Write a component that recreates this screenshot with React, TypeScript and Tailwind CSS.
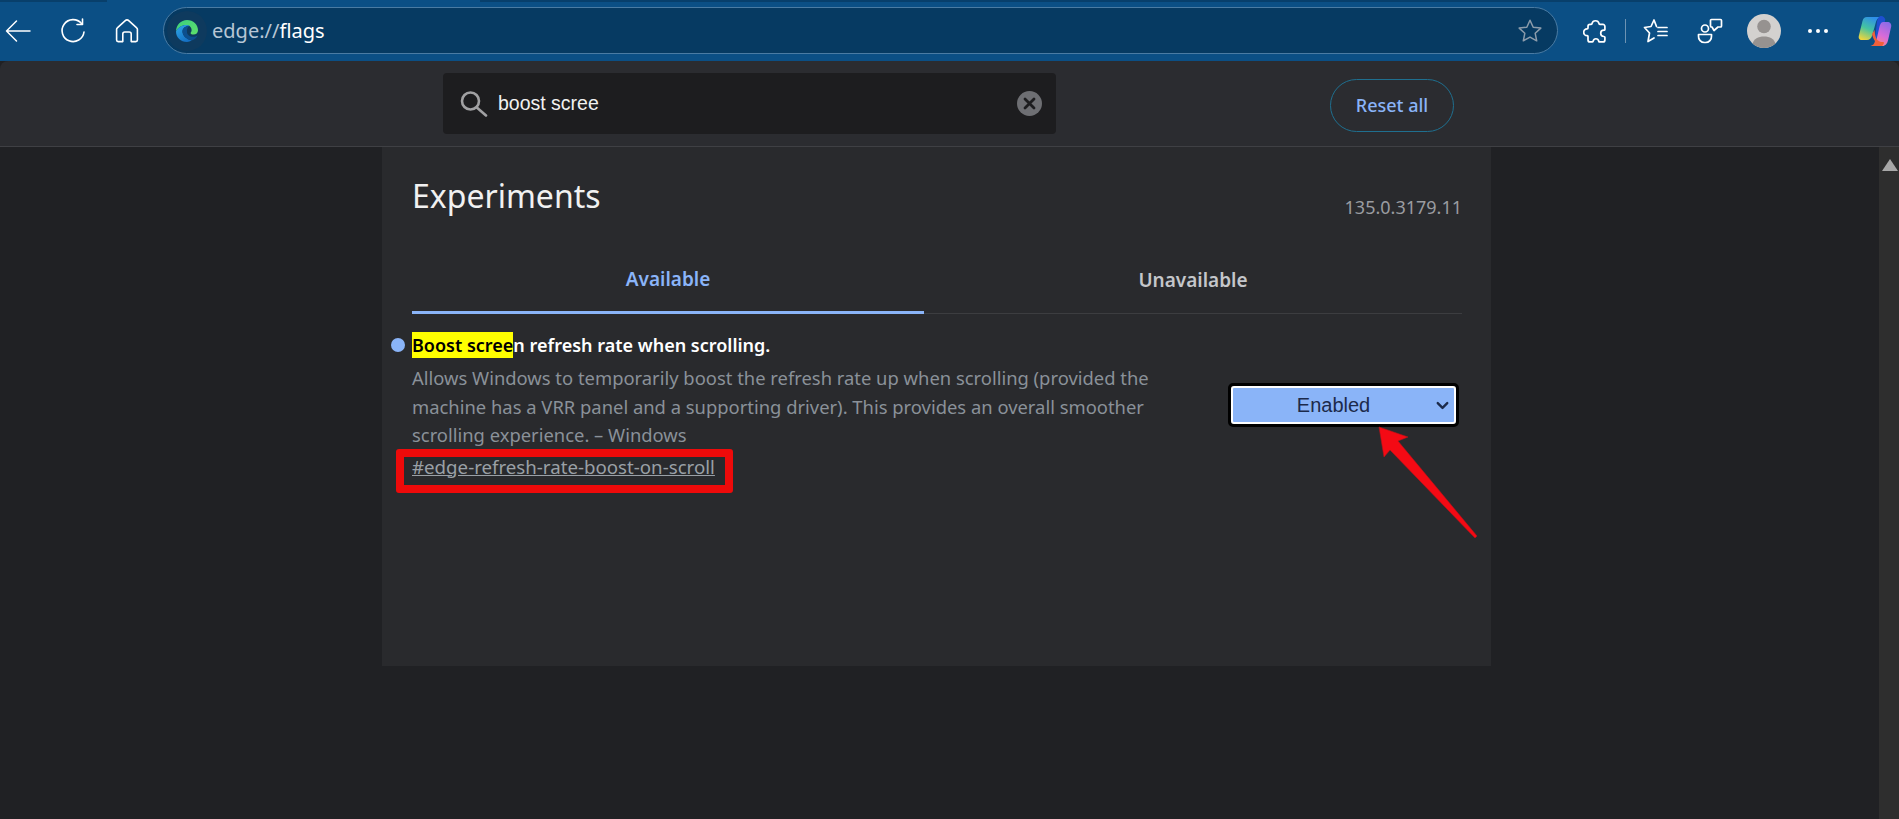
import { ChevronDown } from 'lucide-react'

const uiFont = "font-['Noto_Sans',sans-serif]"
const arialFont = "font-['Liberation_Sans',Arial,sans-serif]"

function BackIcon() {
  return (
    <svg width="26" height="24" viewBox="0 0 26 24" fill="none" stroke="#fff" strokeWidth="1.5" strokeLinecap="round" strokeLinejoin="round">
      <path d="M1.5 12H25M11.5 2 1.5 12l10 10" />
    </svg>
  )
}

function RefreshIcon() {
  return (
    <svg width="26" height="26" viewBox="0 0 26 26" fill="none" stroke="#fff" strokeWidth="1.6" strokeLinecap="round" strokeLinejoin="round">
      <path d="M21.5 5.5A11 11 0 1 0 24 14" />
      <path d="M22.5 1v5.5H17" />
    </svg>
  )
}

function HomeIcon() {
  return (
    <svg width="24" height="24" viewBox="0 0 24 24" fill="none" stroke="#fff" strokeWidth="1.6" strokeLinejoin="round">
      <path d="M10 1.8a3 3 0 0 1 4 0l7.7 7a2 2 0 0 1 .7 1.5V21a1.6 1.6 0 0 1-1.6 1.6h-4.6V15a2 2 0 0 0-2-2h-4.4a2 2 0 0 0-2 2v7.6H3.2A1.6 1.6 0 0 1 1.6 21V10.3a2 2 0 0 1 .7-1.5z" />
    </svg>
  )
}

function EdgeLogo() {
  return (
    <svg width="24" height="24" viewBox="0 0 24 24">
      <defs>
        <linearGradient id="edgeBlue" x1="0" y1="0" x2="0.6" y2="1">
          <stop offset="0" stopColor="#2fa8e8" />
          <stop offset="1" stopColor="#1570c4" />
        </linearGradient>
        <linearGradient id="edgeGreen" x1="0" y1="0" x2="1" y2="1">
          <stop offset="0" stopColor="#3bcf7f" />
          <stop offset="1" stopColor="#5fe06a" />
        </linearGradient>
      </defs>
      <path d="M1 12.5C1 6 6 1 12 1c6.3 0 11 4.6 11 10.2 0 2.8-2 4.4-4.4 4.4-1.7 0-3-.7-3-1.7 0-.6 1-1 1-3 0-2.7-2.4-5-5.3-5C7 5.9 3 8.3 1 12.5z" fill="url(#edgeGreen)" />
      <path d="M1 12.5c2-4.2 6-6.6 10.3-6.6 1.3 0 2.4.4 3.3 1.100-3.800-.5-7.100 2-7.100 5.500 0 3.600 3 6.800 7 8.300 1 .4 2 .5 2.500.5C15 22.400 13.500 23 12 23 5.900 23 1 18.400 1 12.500z" fill="url(#edgeBlue)" />
      <path d="M7.500 12.500c0 3.600 3 6.800 7 8.300 1.600.6 2.900.4 3.500.1 2-1 3.500-2.500 4.500-4.500-1.600 1.500-5 2-7.500.8-3.400-1.700-3-4.500-3-4.500-.3-1.700.3-4.600 2.600-5.700-3.800-.5-7.100 2-7.100 5.500z" fill="#0c4f8e" />
    </svg>
  )
}

function StarIcon() {
  return (
    <svg width="26" height="26" viewBox="0 0 26 26" fill="none" stroke="#8c9cab" strokeWidth="1.5" strokeLinejoin="round">
      <path d="M13 2.200l3.200 7 7.600.9-5.600 5.200 1.500 7.500L13 19.100l-6.700 3.700 1.500-7.500-5.600-5.200 7.600-.9z" />
    </svg>
  )
}

function PuzzleIcon() {
  return (
    <svg width="24" height="26" viewBox="0 0 24 26" fill="none" stroke="#fff" strokeWidth="1.7" strokeLinejoin="round">
      <path d="M9 5.500a3.600 3.600 0 0 1 7 0c0 .5.400.9.900.9h3a2 2 0 0 1 2 2v3c0 .5-.5.800-1 .7a3.200 3.200 0 1 0 0 6.400c.5 0 1 .3 1 .8v2.600a2 2 0 0 1-2 2h-3.400c-.5 0-.8-.4-.8-.9a2.800 2.800 0 0 0-5.500 0c0 .5-.3.900-.8.900H7a2 2 0 0 1-2-2v-3.300c0-.5-.4-.8-.9-.9a3.400 3.400 0 0 1 0-6.800c.5 0 .9-.4.900-.9V8.400a2 2 0 0 1 2-2h1.100c.5 0 .9-.4.900-.9z" />
    </svg>
  )
}

function FavoritesIcon() {
  return (
    <svg width="26" height="26" viewBox="0 0 26 26" fill="none" stroke="#fff" strokeWidth="1.7" strokeLinecap="round" strokeLinejoin="round">
      <path d="M11 20 5 23.500 6.500 15 1.500 9.500 8 8.500 11 2l2.500 6.500" />
      <path d="M15 9.500h9M15 13.500h9M15 17.500h9" />
    </svg>
  )
}

function CollectionsIcon() {
  return (
    <svg width="26" height="26" viewBox="0 0 26 26" fill="none" stroke="#fff" strokeWidth="1.7" strokeLinejoin="round">
      <circle cx="8" cy="10.5" r="3.5" />
      <path d="M1.500 16.500h13V18a6 6 0 0 1-6 6.500h-1a6 6 0 0 1-6-6.500z" />
      <path d="M14.500 1.500h9a1 1 0 0 1 1 1V8a1 1 0 0 1-1 1H21l-4 3.500L15 9h-.5a1 1 0 0 1-1-1V2.500a1 1 0 0 1 1-1z" />
    </svg>
  )
}

function Avatar() {
  return (
    <svg width="34" height="34" viewBox="0 0 34 34">
      <circle cx="17" cy="17" r="17" fill="#d3d1cf" />
      <circle cx="17" cy="12.5" r="6.8" fill="#969290" />
      <path d="M5.500 29.500C7 25 11 22.500 17 22.500s10 2.500 11.500 7A17 17 0 0 1 17 34a17 17 0 0 1-11.500-4.500z" fill="#969290" />
    </svg>
  )
}

function CopilotLogo() {
  return (
    <svg width="34" height="32" viewBox="0 0 34 32">
      <defs>
        <linearGradient id="copLeft" x1="0.6" y1="0" x2="0.2" y2="1">
          <stop offset="0" stopColor="#2f8fe8" />
          <stop offset="0.5" stopColor="#45c4a0" />
          <stop offset="1" stopColor="#f2d53c" />
        </linearGradient>
        <linearGradient id="copRight" x1="0.8" y1="0" x2="0.3" y2="1">
          <stop offset="0" stopColor="#8b6be8" />
          <stop offset="0.55" stopColor="#d86bd8" />
          <stop offset="1" stopColor="#ff8a7a" />
        </linearGradient>
      </defs>
      <path d="M9 2h13c-2.500 1-3.500 3-4.200 5.500l-3.600 13c-.7 2.500-2.700 4.500-5.200 4.500H3.500C1 25 .3 22.800.9 20.500L4.500 6C5.200 3.500 6.500 2 9 2z" fill="url(#copLeft)" />
      <path d="M19 6.500c.7-2.500 1.500-5 3.500-5.500 2-.5 4 1 4.800 3.500l-3.500 17c-.6 3-2 5-4.800 6-1 .3-2 .2-2.300-1.500z" fill="#1e4fd0" />
      <path d="M25 7h4.500C32 7 33.700 9 33.200 11.500l-3.200 14c-.7 3-2.700 5.500-5.500 5.500H12c3 0 5.500-2 6.200-5l3-13C21.800 10 23 7 25 7z" fill="url(#copRight)" />
      <path d="M14 19l2.500-4c.5 3 .5 8 3.500 10.500 1.500 1.200 3 1.500 4.500 1.500 1.500 0 2.500.5 0 3.700-.5.300-1.500.3-2.500.3H12c3 0 4.500-2.500 5-5-1.500-2-2.500-4.500-3-7z" fill="#f0603a" />
    </svg>
  )
}

function SearchIcon() {
  return (
    <svg width="28" height="26" viewBox="0 0 28 26" fill="none" stroke="#a1a1a3" strokeWidth="2.6" strokeLinecap="round">
      <circle cx="10.5" cy="10" r="8.5" />
      <path d="M16.800 16.500 26 24.500" />
    </svg>
  )
}

function ClearIcon() {
  return (
    <svg width="25" height="25" viewBox="0 0 25 25" fill="none">
      <circle cx="12.5" cy="12.5" r="12.5" fill="#6e6f73" />
      <path d="M8 8l9 9M17 8l-9 9" stroke="#1d1d1f" strokeWidth="2.8" strokeLinecap="round" />
    </svg>
  )
}

function RedArrow() {
  return (
    <svg className="absolute left-[1370px] top-[420px]" width="115" height="125" viewBox="1370 420 115 125">
      <polygon points="1379,427 1408,437 1398,441 1477,536 1475,538 1390,450 1384,457" fill="#f40a14" stroke="#b8121a" strokeWidth="0.6" strokeLinejoin="round" />
    </svg>
  )
}

export default function App() {
  return (
    <div className={`relative flex h-[819px] w-[1899px] flex-col overflow-hidden bg-[#202124] ${uiFont}`}>
      {/* browser toolbar */}
      <div className="flex h-[61px] shrink-0 flex-col bg-[#0b4f85]">
        <div className="flex h-[2px] shrink-0 bg-[#083f6b]">
          <div className="ml-[107px] w-[373px] bg-[#0b4f85]" />
        </div>
        <div className="flex flex-1 items-center pb-[2px]">
          <div className="flex w-[163px] items-center">
            <div className="ml-[5px] w-[55px]"><BackIcon /></div>
            <div className="w-[55px]"><RefreshIcon /></div>
            <div><HomeIcon /></div>
          </div>
          <div className="flex h-[47px] w-[1395px] items-center rounded-full border border-[#4a7ba3] bg-[#063a62]">
            <div className="ml-[3px] flex size-[40px] items-center justify-center rounded-full bg-[#0e3a5e]"><EdgeLogo /></div>
            <span className="ml-[5px] text-[20px] leading-none text-[#b7c6d5]">
              edge://<span className="text-white">flags</span>
            </span>
            <div className="ml-auto mr-[14px]"><StarIcon /></div>
          </div>
          <div className="ml-[25px]"><PuzzleIcon /></div>
          <div className="ml-[18px] h-[24px] w-px bg-[#6d93b3]" />
          <div className="ml-[17px]"><FavoritesIcon /></div>
          <div className="ml-[28px]"><CollectionsIcon /></div>
          <div className="ml-[24px]"><Avatar /></div>
          <div className="ml-[27px] flex w-[20px] items-center justify-between">
            <span className="size-[4px] rounded-full bg-white" />
            <span className="size-[4px] rounded-full bg-white" />
            <span className="size-[4px] rounded-full bg-white" />
          </div>
          <div className="ml-[30px]"><CopilotLogo /></div>
        </div>
      </div>

      {/* search header */}
      <div className="flex h-[86px] shrink-0 items-center rounded-t-[8px] border-b border-b-[#3f4044] bg-[#2b2c30]">
        <div className={`ml-[443px] flex h-[61px] w-[613px] items-center rounded-[4px] bg-[#1d1d1f] pl-[17px] pr-[14px] ${arialFont}`}>
          <SearchIcon />
          <span className="ml-[10px] text-[19.5px] leading-none text-[#f1f1f1]">boost scree</span>
          <div className="ml-auto"><ClearIcon /></div>
        </div>
        <button type="button" className="ml-[274px] mt-[3px] h-[53px] w-[124px] rounded-full border border-[#1f6f8f] text-[18px] font-medium text-[#8ab4f8]">
          Reset all
        </button>
      </div>

      {/* page body */}
      <div className="flex min-h-0 flex-1">
        <div className="ml-[382px] h-[519px] w-[1109px] bg-[#292a2d] pl-[30px] pr-[29px]">
          <div className="flex h-[100px] items-center justify-between">
            <h1 className="-mt-[2px] text-[32px] font-normal leading-[44px] text-[#f1f1f1]">Experiments</h1>
            <span className="mt-[20px] text-[18px] text-[#9a9ca0]">135.0.3179.11</span>
          </div>
          <div className="flex h-[67px] border-b border-b-[#3c3d40]">
            <div className="-mb-px flex w-[512px] items-center justify-center border-b-[3px] border-b-[#8ab4f8] text-[19px] font-semibold text-[#8ab4f8]">
              Available
            </div>
            <div className="flex flex-1 items-center justify-center text-[19px] font-semibold text-[#c4c6ca]">
              Unavailable
            </div>
          </div>
          <div className="flex items-start pt-[17px]">
            <span className="-ml-[21px] mr-[7px] mt-[7px] size-[14px] shrink-0 rounded-full bg-[#8ab4f8]" />
            <div className="w-[800px]">
              <div className="text-[18px] font-semibold leading-[28px] text-white">
                <mark className="inline-block bg-[#ffff00] leading-[26px] text-black">Boost scree</mark>n refresh rate when scrolling.
              </div>
              <p className="mt-[5px] text-[18.4px] leading-[28.5px] text-[#8a9199]">
                Allows Windows to temporarily boost the refresh rate up when scrolling (provided the<br />
                machine has a VRR panel and a supporting driver). This provides an overall smoother<br />
                scrolling experience. – Windows
              </p>
              <a href="#edge-refresh-rate-boost-on-scroll" className="mt-[3px] block text-[18.7px] leading-[28px] text-[#9aa0a6] underline">
                #edge-refresh-rate-boost-on-scroll
              </a>
            </div>
            <div className={`relative ml-auto mr-[3px] mt-[52px] flex h-[44px] w-[231px] items-center justify-center rounded-[5px] border-[3px] border-black ${arialFont}`}>
              <div className="flex size-full items-center justify-center rounded-[3px] border-2 border-white bg-[#8ab4f8] pr-[20px] text-[20px] text-[#1c2a4a]">
                Enabled
                <ChevronDown className="absolute right-[4px] size-[19px]" strokeWidth={3} />
              </div>
            </div>
          </div>
        </div>
        <div className="ml-auto flex w-[20px] justify-end bg-[#2e2e2e] pr-[1px] pt-[12px]">
          <div className="h-0 w-0 border-x-[8px] border-b-[12px] border-x-transparent border-b-[#a8a8a8]" />
        </div>
      </div>

      {/* annotations */}
      <div className="absolute left-[396px] top-[449px] h-[44px] w-[337px] rounded-[3px] border-[8px] border-[#ee0a0a]" />
      <RedArrow />
    </div>
  )
}
